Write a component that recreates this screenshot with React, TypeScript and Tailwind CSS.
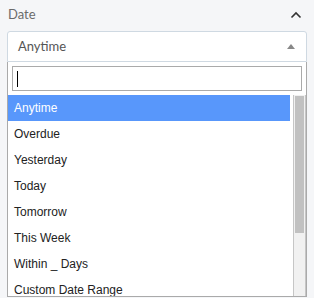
import React from "react";

const items = [
  "Anytime",
  "Overdue",
  "Yesterday",
  "Today",
  "Tomorrow",
  "This Week",
  "Within _ Days",
  "Custom Date Range",
  "Next Week",
];

export default function App() {
  return (
    <div className="w-[314px] h-[298px] bg-[#f5f6f8] overflow-hidden px-[7px]" style={{ fontFamily: "Lato, 'Open Sans', sans-serif" }}>
      <div className="h-[31px] flex items-center justify-between">
        <span className="ml-[1px] text-[13px] text-[#6b6b6b] leading-none -mt-[2px]">Date</span>
        <svg width="12" height="8" viewBox="0 0 12 8" className="mr-[5px] -mt-[1px]">
          <path d="M1.5 6.5 L6 2 L10.5 6.5" fill="none" stroke="#333" strokeWidth="1.6" />
        </svg>
      </div>
      <div className="h-[31px] bg-white border border-[#cfd9e2] rounded-t-[3px] flex items-center justify-between pl-[10px] pr-[11px]">
        <span className="text-[13px] text-[#555] leading-none">Anytime</span>
        <svg width="8" height="5" viewBox="0 0 8 5">
          <path d="M0 5 L4 0 L8 5 Z" fill="#888" />
        </svg>
      </div>
      <div className="h-[235px] bg-white border-x border-b border-[#aaaaaa] flex flex-col">
        <div className="pt-[4px] px-[4px] pb-[4px]">
          <div className="h-[25px] border border-[#aaaaaa] flex items-center pl-[4px]">
            <div className="w-[1px] h-[16px] bg-black" />
          </div>
        </div>
        <div className="flex flex-1 min-h-0">
          <div className="w-[282px] overflow-hidden" style={{ fontFamily: "'Liberation Sans', Arial, sans-serif" }}>
            {items.map((it, i) => (
              <div
                key={it}
                className={
                  i === 0
                    ? "h-[26px] flex items-center pl-[6px] text-[12px] bg-[#5897fb] text-white"
                    : "h-[26px] flex items-center pl-[6px] text-[12px] text-[#222]"
                }
              >
                {it}
              </div>
            ))}
          </div>
          <div className="w-[3px]" />
          <div className="w-[13px] bg-[#f1f1f1] border-x border-[#c6c6c6] pt-[1px] px-[1px]">
            <div className="h-[137px] bg-[#c1c1c1]" />
          </div>
        </div>
      </div>
    </div>
  );
}
